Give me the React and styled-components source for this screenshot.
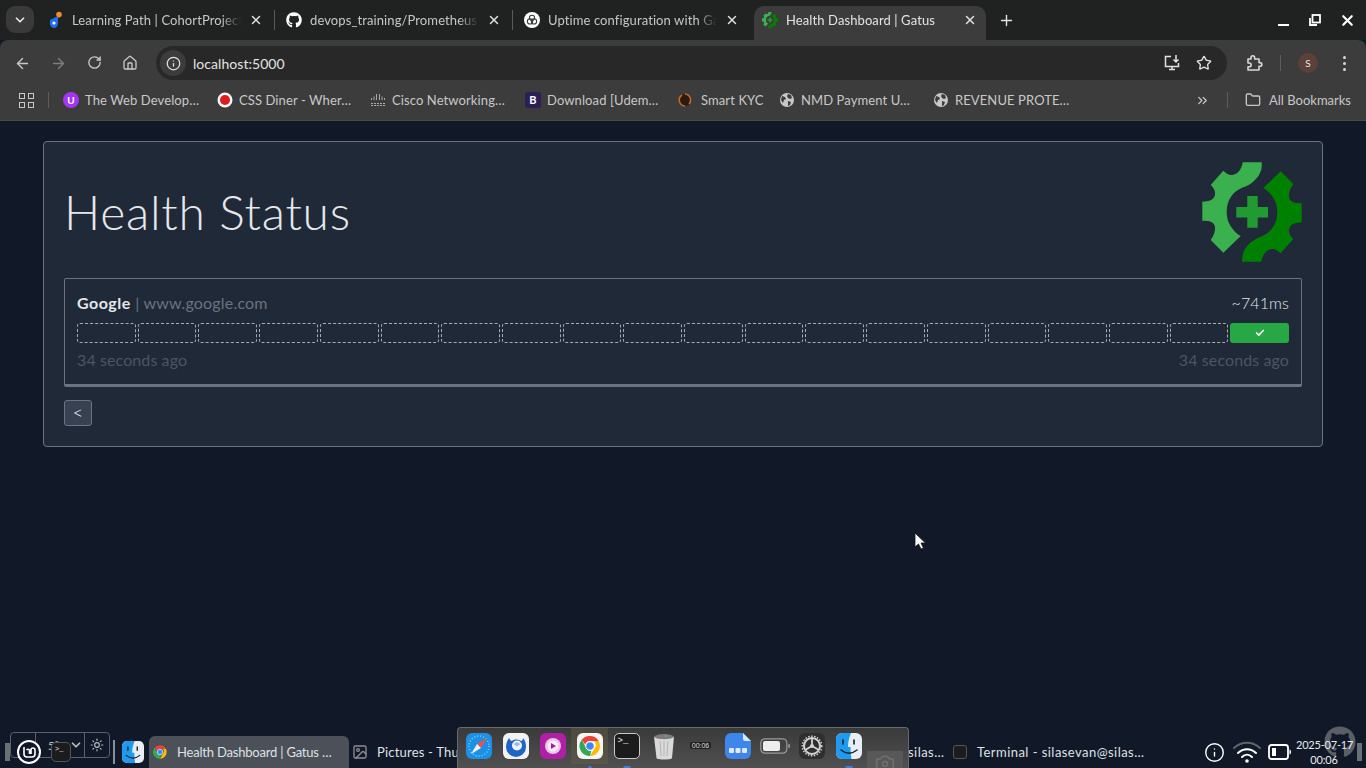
import React from "react";
import styled, { createGlobalStyle } from "styled-components";
import {
  ArrowLeft, ArrowRight, RotateCw, Home, Info, Star, X, Plus, ChevronDown,
  ChevronsRight, Folder, Check, Sun, Camera, Image as ImageIcon,
} from "lucide-react";
import { FaGithub } from "react-icons/fa";

const Global = createGlobalStyle`
  html, body { margin: 0; padding: 0; background: #111827; overflow: hidden; }
  body { font-family: Lato, "Open Sans", "Liberation Sans", sans-serif; }
  * { box-sizing: border-box; }
`;

const Screen = styled.div`
  position: relative;
  width: 1366px;
  height: 768px;
  display: flex;
  flex-direction: column;
  overflow: hidden;
  background: #111827;
`;

/* ---------- browser chrome ---------- */
const TabStrip = styled.div`
  height: 40px;
  background: #202221;
  display: flex;
  align-items: flex-end;
  padding-left: 6px;
`;
const TabMenu = styled.div`
  width: 28px;
  height: 27px;
  margin: 0 6px 7px 0;
  border-radius: 9px;
  background: #3a3a3a;
  color: #e4e4e4;
  display: flex;
  align-items: center;
  justify-content: center;
`;
const Tab = styled.div`
  position: relative;
  width: ${(p) => (p.$active ? 232 : 238)}px;
  height: 34px;
  padding: 0 ${(p) => (p.$active ? 9 : 15)}px 6px 8px;
  display: flex;
  align-items: center;
  background: ${(p) => (p.$active ? "#3c3c3c" : "transparent")};
  border-radius: 10px 10px 0 0;
  color: #c6c7c7;
  font-size: 13px;
  &::after {
    content: "";
    display: ${(p) => (p.$sep ? "block" : "none")};
    position: absolute;
    right: 3px;
    top: 4px;
    width: 1px;
    height: 20px;
    background: #5a5a5a;
  }
`;
const TabIcon = styled.span`
  width: 16px;
  height: 16px;
  flex: none;
  margin-right: 8px;
  display: flex;
  align-items: center;
  justify-content: center;
  color: #fff;
`;
const TabTitle = styled.span`
  flex: 1;
  white-space: nowrap;
  overflow: hidden;
  letter-spacing: 0.1px;
  color: ${(p) => (p.$active ? "#e3e3e3" : "#c6c7c7")};
  mask-image: linear-gradient(to right, #000 88%, transparent 100%);
`;
const TabClose = styled(X)`
  flex: none;
  margin-left: 8px;
  color: #e0e0e0;
`;
const NewTab = styled.div`
  width: 28px;
  height: 34px;
  padding-bottom: 6px;
  color: #e3e3e3;
  display: flex;
  align-items: center;
  justify-content: center;
  margin-left: 6px;
`;
const WindowControls = styled.div`
  margin-left: auto;
  height: 40px;
  display: flex;
  align-items: center;
  gap: 14px;
  padding-right: 10px;
`;
const WinGlyph = styled.span`
  width: 18px;
  height: 18px;
  display: flex;
  align-items: center;
  justify-content: center;
  color: #fff;
`;

const Toolbar = styled.div`
  height: 40px;
  background: #3c3c3c;
  border-radius: 8px 8px 0 0;
  display: flex;
  align-items: center;
  color: #c7c7c7;
  padding-top: 6px;
`;
const NavButton = styled.span`
  width: 36px;
  display: flex;
  justify-content: center;
  color: ${(p) => (p.$dim ? "#7d7d7d" : "#c7c7c7")};
`;
const NavGroup = styled.div`
  display: flex;
  margin-left: 4px;
`;
const Omnibox = styled.div`
  width: 1071px;
  height: 34px;
  margin-left: 8px;
  background: #282828;
  border-radius: 17px;
  display: flex;
  align-items: center;
  padding: 0 15px 0 4px;
  font-size: 14px;
  color: #e3e3e3;
  letter-spacing: 0.05px;
`;
const InfoChip = styled.span`
  width: 26px;
  height: 26px;
  border-radius: 50%;
  background: #3c3c3c;
  display: flex;
  align-items: center;
  justify-content: center;
  margin-right: 7px;
  color: #e3e3e3;
`;
const OmniActions = styled.div`
  margin-left: auto;
  display: flex;
  align-items: center;
  gap: 15px;
  color: #e3e3e3;
`;
const ToolRight = styled.div`
  flex: 1;
  display: flex;
  align-items: center;
  padding-left: 18px;
  color: #d8d8d8;
`;
const VSep = styled.span`
  width: 1px;
  height: 16px;
  margin: 0 ${(p) => p.$m || 16}px;
  background: #5c5c5c;
  flex: none;
`;
const Avatar = styled.span`
  width: 20px;
  height: 20px;
  border-radius: 50%;
  background: #5d4037;
  color: #e8e8e8;
  font-size: 10px;
  display: flex;
  align-items: center;
  justify-content: center;
`;
const Kebab = styled.span`
  margin-left: 25px;
  display: flex;
  flex-direction: column;
  gap: 3px;
  & > i { width: 3px; height: 3px; border-radius: 50%; background: #d8d8d8; display: block; }
`;

const BookmarkBar = styled.div`
  height: 41px;
  background: #3c3c3c;
  border-bottom: 1px solid #4a4a4a;
  display: flex;
  align-items: center;
  padding-left: 19px;
  padding-right: 15px;
  font-size: 13px;
  color: #c8c8c8;
`;
const AppsGrid = styled.span`
  display: grid;
  grid-template-columns: 6px 6px;
  grid-gap: 3px;
  & > i { width: 6px; height: 6px; border: 1.5px solid #c7c7c7; display: block; }
`;
const Bookmark = styled.div`
  display: flex;
  align-items: center;
  white-space: nowrap;
  width: ${(p) => p.$w}px;
  letter-spacing: 0.1px;
`;
const BookmarkIcon = styled.span`
  width: 16px;
  height: 16px;
  margin-right: ${(p) => p.$gap || 6}px;
  flex: none;
  display: flex;
  align-items: center;
  justify-content: center;
`;
const UdemyDot = styled.span`
  width: 16px;
  height: 16px;
  border-radius: 50%;
  background: #a435f0;
  color: #fff;
  font-size: 10px;
  font-weight: 700;
  text-align: center;
  line-height: 16px;
`;
const BootBadge = styled.span`
  width: 16px;
  height: 16px;
  border-radius: 3px;
  background: #2b1f55;
  color: #fff;
  font-size: 11px;
  font-weight: 700;
  text-align: center;
  line-height: 16px;
`;
const BookmarkEnd = styled.div`
  margin-left: auto;
  display: flex;
  align-items: center;
  color: #c8c8c8;
`;
const AllLabel = styled.span`
  margin-left: 8px;
`;

/* ---------- page ---------- */
const Main = styled.main`
  flex: 1;
  padding: 20px 43px 0;
`;
const Card = styled.section`
  width: 1280px;
  height: 306px;
  background: #1f2937;
  border: 1px solid #6b7280;
  border-radius: 4px;
  padding: 20px;
`;
const CardHead = styled.header`
  height: 100px;
  display: flex;
  align-items: center;
  justify-content: space-between;
  margin-bottom: 16px;
`;
const Title = styled.h1`
  margin: 0 0 2px;
  font-size: 48px;
  font-weight: 300;
  color: #e5e7eb;
  letter-spacing: 0.72px;
`;
const ServiceBox = styled.div`
  height: 109px;
  border: 1px solid #6b7280;
  border-bottom-width: 3px;
  border-radius: 2px;
  padding: 11px 12px 0;
`;
const ServiceRow = styled.div`
  display: flex;
  justify-content: space-between;
  align-items: center;
  height: 24px;
  font-size: 16px;
  color: #e5e7eb;
  font-weight: 300;
  letter-spacing: 0.1px;
`;
const Name = styled.strong`
  font-weight: 700;
  color: #e5e7eb;
  letter-spacing: 0.5px;
`;
const Host = styled.span`
  color: #6b7280;
  font-weight: 400;
  letter-spacing: 0.2px;
`;
const Bars = styled.div`
  display: grid;
  grid-template-columns: repeat(20, 1fr);
  gap: 2px;
  height: 20px;
  margin: 9px 0 4px;
`;
const Bar = styled.div`
  border-radius: 3px;
  border: ${(p) => (p.$ok ? "none" : "1px dashed #a7adb7")};
  background: ${(p) => (p.$ok ? "#28a745" : "transparent")};
  color: #fff;
  display: flex;
  align-items: center;
  justify-content: center;
`;
const TimeRow = styled(ServiceRow)`
  color: #4b5563;
  font-weight: 400;
`;
const BackButton = styled.button`
  display: block;
  margin-top: 13px;
  width: 28px;
  height: 26px;
  padding: 0 0 5px;
  background: #374151;
  border: 1px solid #6b7280;
  border-radius: 3px;
  color: #f3f4f6;
  font: 300 18px Lato, sans-serif;
`;
const CursorMark = styled.svg`
  position: absolute;
  left: 914px;
  top: 532px;
`;

/* ---------- desktop panel ---------- */
const Panel = styled.footer`
  position: relative;
  height: 32px;
  display: flex;
  align-items: stretch;
  padding-left: 17px;
  color: #d5d8dd;
  font-size: 13px;
`;
const Grip = styled.span`
  position: absolute;
  top: 7px;
  ${(p) => (p.$right ? "right: 4px;" : "left: 5px;")}
  width: 5px;
  height: 18px;
  background: radial-gradient(circle, #6b6f76 0.8px, transparent 1px) 0 0 / 2px 2px;
`;
const AppletBox = styled.div`
  position: absolute;
  left: 10px;
  top: -4px;
  width: 100px;
  height: 26px;
  border: 1px solid #5b616c;
  border-radius: 4px;
  display: grid;
  grid-template-columns: 25px 49px 1fr;
  color: #b9bdc3;
  font-size: 11px;
`;
const AppletCell = styled.span`
  border-right: ${(p) => (p.$last ? "none" : "1px solid #5b616c")};
  display: flex;
  align-items: center;
  justify-content: ${(p) => (p.$spread ? "space-between" : "center")};
  padding: 0 ${(p) => (p.$spread ? 1 : 0)}px 0 ${(p) => (p.$spread ? 12 : 0)}px;
`;
const MintLogo = styled.span`
  position: relative;
  width: 24px;
  height: 24px;
  margin-top: 4px;
  border-radius: 50%;
  background: #111827;
  border: 2.5px solid #fff;
  flex: none;
  display: flex;
  align-items: center;
  justify-content: center;
`;
const TermTile = styled.span`
  position: relative;
  flex: none;
  width: ${(p) => p.$s || 20}px;
  height: ${(p) => p.$s || 20}px;
  background: #1c1c1c;
  border: 1px solid ${(p) => p.$line || "#555"};
  border-radius: ${(p) => (p.$s ? Math.round(p.$s / 5) : 5)}px;
  color: #eee;
  font: ${(p) => (p.$s && p.$s > 20 ? 9 : 7)}px "Liberation Mono", monospace;
  line-height: 1;
  padding: 3px 0 0 3px;
`;
const PanelTerm = styled(TermTile)`
  margin: 6px 42px 0 10px;
`;
const PanelSep = styled.span`
  width: 2px;
  height: 24px;
  background: #8a8f96;
  margin: 4px 7px 0 0;
  flex: none;
`;
const TaskItem = styled.div`
  width: 200px;
  flex: none;
  display: flex;
  align-items: center;
  padding-left: 3px;
  border-radius: 6px 6px 0 0;
  background: ${(p) => (p.$active ? "#4c5059" : "transparent")};
  color: #dfe2e6;
  white-space: nowrap;
  overflow: hidden;
  letter-spacing: ${(p) => p.$track ?? 0.2}px;
`;
const TaskIcon = styled.span`
  width: 16px;
  height: 16px;
  margin-right: 9px;
  flex: none;
  display: flex;
  align-items: center;
  justify-content: center;
  color: #8d8f93;
`;
const FinderWrap = styled.span`
  margin: 5px 5px 0 0;
  flex: none;
  display: flex;
`;
const Tray = styled.div`
  margin-left: auto;
  display: flex;
  align-items: center;
  color: #fff;
  position: relative;
`;
const TrayInfo = styled(Info)`
  margin-right: 7px;
`;
const TrayGap = styled.span`
  width: 6px;
`;
const Clock = styled.div`
  width: 56px;
  margin: 0 14px 0 4px;
  text-align: center;
  font-size: 11px;
  letter-spacing: -0.2px;
  line-height: 15px;
  color: #e8eaee;
  white-space: nowrap;
  position: relative;
  z-index: 1;
`;
const GithubBlob = styled(FaGithub)`
  position: absolute;
  right: 10px;
  top: -10px;
  color: #5a5f66;
`;
const Dock = styled.div`
  position: absolute;
  left: 457px;
  top: 727px;
  width: 452px;
  height: 41px;
  border: 1px solid #6a6a6a;
  border-bottom: none;
  border-radius: 4px 4px 0 0;
  background: linear-gradient(#3a3a3a, #505050);
  display: flex;
  align-items: flex-start;
  padding: 5px 0 0 2px;
  z-index: 2;
`;
const DockCell = styled.div`
  position: relative;
  width: 37px;
  height: 36px;
  margin-top: -5px;
  padding: ${(p) => (p.$mid ? 0 : 5)}px 0 0;
  display: flex;
  flex: none;
  justify-content: center;
  align-items: ${(p) => (p.$mid ? "center" : "flex-start")};
  background: ${(p) => (p.$lit ? "linear-gradient(#4d4b3d, #58564a)" : "none")};
  &::after {
    content: "";
    display: ${(p) => (p.$dot ? "block" : "none")};
    position: absolute;
    left: 50%;
    bottom: -4px;
    width: ${(p) => (p.$dot === 2 ? 7 : 3)}px;
    height: 2px;
    transform: translateX(-50%);
    background: #3b7fd9;
  }
`;
const Tile = styled.span`
  width: 26px;
  height: 26px;
  border-radius: 6px;
  background: ${(p) => p.$bg};
  display: flex;
  align-items: center;
  justify-content: center;
  overflow: hidden;
  color: #fff;
`;
const DockClock = styled.span`
  margin-top: 9px;
  padding: 0 2px;
  background: #222;
  border-radius: 2px;
  color: #ddd;
  font: 7px "Liberation Sans", sans-serif;
`;
const GhostTile = styled.span`
  position: absolute;
  left: 409px;
  top: 23px;
  width: 36px;
  height: 18px;
  background: #585858;
  color: #6e6e6e;
  display: flex;
  justify-content: center;
  padding-top: 2px;
`;

/* ---------- drawings ---------- */
const halfGear =
  "M40.7 0.3 L59.7 0.3 C60.3 8 58 13 53 18 C49 22 45 24 41.3 25.3 C31 29 24.7 38 24.7 49.7 C24.7 57 27 62 30 66 C32.5 69.5 35 72 38.7 74 L21.3 90.7 L8.7 78 C12 73 13.5 69 13 64.7 C12 61 10 59.7 6 59 L0.3 58.7 L0.3 39.7 L6 39 C10 38.3 12 36.5 13 33 C13.5 29 12 26 8.7 23 L21.3 8.7 C25 12 27 13.3 29.7 13 C35 13 39.5 8 40.7 0.3 Z";

const GatusLogo = ({ size = 100 }) => (
  <svg width={size} height={size} viewBox="0 0 100 100">
    <path d={halfGear} fill="#3bb04e" />
    <path d={halfGear} fill="#008000" transform="rotate(180 50 50)" />
    <path d="M45.3 34h10.4v11h10.3v10.4H55.7v10.3H45.3V55.4H34.3V45h11z" fill="#229a32" />
  </svg>
);
const CohortIcon = () => (
  <svg width="16" height="18" viewBox="0 0 16 18">
    <path d="M2 9l8-4v7c0 3-2 5-4 5s-4-2-4-4z" fill="#1f6ff2" />
    <circle cx="6" cy="12" r="1.6" fill="#fff" />
    <circle cx="11" cy="3.6" r="2.8" fill="#f08a2c" />
  </svg>
);
const KnotIcon = () => (
  <svg width="16" height="16" viewBox="0 0 16 16">
    <circle cx="8" cy="8" r="8" fill="#fff" />
    <g fill="none" stroke="#3a3a3a" strokeWidth="1.1">
      <circle cx="8" cy="5.8" r="2.6" />
      <circle cx="6" cy="9.4" r="2.6" />
      <circle cx="10" cy="9.4" r="2.6" />
    </g>
  </svg>
);
const Globe = () => (
  <svg width="14" height="14" viewBox="0 0 14 14">
    <circle cx="7" cy="7" r="7" fill="#c7c7c7" />
    <path d="M2 3l3 1 1 2-2 1-1 3-2-3zM8 1l3 1 1 3-2 1-2-1-1-2zM8 8l3 1-1 3-2 1z" fill="#3c3c3c" />
  </svg>
);
const CiscoIcon = () => (
  <svg width="16" height="14" viewBox="0 0 16 14">
    <g stroke="#a8a8a8" strokeWidth="1">
      <path d="M1.500 5v2M4 3.500v3.500M6.500 1v6M9.500 1v6M12 3.500v3.500M14.500 5v2" />
      <path d="M1 10.500h14M1 12.500h14" strokeDasharray="2 1" />
    </g>
  </svg>
);
const KycIcon = () => (
  <svg width="14" height="16" viewBox="0 0 14 16">
    <circle cx="7" cy="8" r="6" fill="#2a1c12" />
    <path d="M7 2a6 6 0 0 1 4 10M7 14a6 6 0 0 1-3-11" fill="none" stroke="#c9691f" strokeWidth="1.500" />
  </svg>
);
const RedDot = () => (
  <svg width="16" height="16" viewBox="0 0 16 16">
    <circle cx="8" cy="8" r="7.500" fill="#fff" />
    <circle cx="8" cy="8" r="5" fill="#e01b1b" />
  </svg>
);
const ChromeIcon = ({ size = 16 }) => (
  <svg width={size} height={size} viewBox="0 0 48 48">
    <path d="M24 4a20 20 0 0 1 17.300 10H24a10 10 0 0 0-9.500 6.900L7.400 11.600A20 20 0 0 1 24 4z" fill="#ea4335" />
    <path d="M41.300 14A20 20 0 0 1 24 44l8.700-15a10 10 0 0 0-.7-15z" fill="#fbbc04" />
    <path d="M24 44A20 20 0 0 1 7.400 11.600L16 27a10 10 0 0 0 10.600 6.700z" fill="#34a853" />
    <circle cx="24" cy="24" r="8.500" fill="#4285f4" stroke="#fff" strokeWidth="2" />
  </svg>
);
const FinderIcon = ({ size = 22 }) => (
  <svg width={size} height={size} viewBox="0 0 26 26">
    <rect width="26" height="26" rx="6" fill="#e8eef6" />
    <path d="M6 0h9c-2 5-3 9-3 14h2.500c0 4 .3 8 1 12H6a6 6 0 0 1-6-6V6a6 6 0 0 1 6-6z" fill="#1e9bf0" />
    <path d="M7 7v4M18 7v4" stroke="#122" strokeWidth="1.600" strokeLinecap="round" />
    <path d="M5 17c5 4 11 4 16 0" fill="none" stroke="#122" strokeWidth="1.400" strokeLinecap="round" />
  </svg>
);
const WifiIcon = () => (
  <svg width="30" height="24" viewBox="0 0 30 24" fill="none" strokeLinecap="round">
    <path d="M2 8c8-7 18-7 26 0" stroke="#5d6470" strokeWidth="2" />
    <path d="M6 13c5.500-5 12.500-5 18 0" stroke="#fff" strokeWidth="2" />
    <path d="M10 17c3-3 7-3 10 0" stroke="#fff" strokeWidth="2" />
    <circle cx="15" cy="21" r="1.800" fill="#fff" />
  </svg>
);
const BatteryIcon = () => (
  <svg width="24" height="16" viewBox="0 0 24 16">
    <rect x="1" y="1" width="19" height="14" rx="2.500" fill="none" stroke="#fff" strokeWidth="1.800" />
    <rect x="4" y="4" width="4" height="8" fill="#fff" />
    <path d="M21.500 5.500c2 0 2 5 0 5z" fill="#fff" />
  </svg>
);
const InstallIcon = () => (
  <svg width="18" height="18" viewBox="0 0 18 18" fill="none" stroke="#e3e3e3" strokeWidth="1.500">
    <path d="M8 2.500H2.500v10h13V9" />
    <path d="M6 15.500h6M9 12.500v3" />
    <path d="M13 1v6.500M10.500 5.500L13 8l2.500-2.500" />
  </svg>
);
const PuzzleIcon = () => (
  <svg width="18" height="18" viewBox="0 0 18 18" fill="none" stroke="#d8d8d8" strokeWidth="1.600" strokeLinejoin="round">
    <path d="M3 5h3V3.500a1.800 1.800 0 0 1 3.600 0V5h4.400v3.600h1a1.800 1.800 0 0 1 0 3.600h-1V16H3v-3.200h1.200a1.900 1.900 0 0 0 0-3.800H3z" />
  </svg>
);
const RestoreIcon = () => (
  <svg width="12" height="12" viewBox="0 0 12 12" fill="none" stroke="#fff" strokeWidth="1.800">
    <rect x="3.500" y="1" width="7.500" height="7.500" />
    <path d="M1 4v7h7" />
  </svg>
);
const MinIcon = () => (
  <svg width="11" height="11" viewBox="0 0 11 11"><rect y="9" width="11" height="2" fill="#fff" /></svg>
);
const SafariIcon = () => (
  <svg width="26" height="26" viewBox="0 0 26 26">
    <rect width="26" height="26" rx="6" fill="#1c8fe6" />
    <circle cx="13" cy="13" r="10" fill="none" stroke="#8fd0fa" strokeWidth="1.500" strokeDasharray="1 2" />
    <path d="M21 5l-10 6 4 4z" fill="#f04f43" />
    <path d="M5 21l10-6-4-4z" fill="#eef3f7" />
  </svg>
);
const BirdIcon = () => (
  <svg width="26" height="26" viewBox="0 0 26 26">
    <rect width="26" height="26" rx="6" fill="#f3f3f3" />
    <path d="M6 5c-2 3-3 6-3 9a10 10 0 0 0 20 0c0-4-1-7-3-9 0 2-1 3-2 3-3-2-7-2-9 0-1 0-2-1-3-3z" fill="#1d66c7" />
    <circle cx="14" cy="12.500" r="5" fill="#f3f3f3" />
    <path d="M10.500 11l3.500 2.500 3.500-2.500-3.500-2z" fill="#8dbbe8" />
  </svg>
);
const MusicIcon = () => (
  <svg width="26" height="26" viewBox="0 0 26 26">
    <rect width="26" height="26" rx="6" fill="#b01fa5" />
    <circle cx="13" cy="13" r="8" fill="#e9c6e6" />
    <circle cx="13" cy="13" r="5.500" fill="#f7eef6" />
    <path d="M11 10l5 3-5 3z" fill="#a61d9b" />
  </svg>
);
const TrashIcon = () => (
  <svg width="24" height="28" viewBox="0 0 24 28">
    <ellipse cx="12" cy="4" rx="10" ry="3" fill="#7c7c7c" />
    <circle cx="8" cy="3.500" r="1" fill="#c06a4a" />
    <circle cx="14" cy="3" r="1" fill="#6a9ac6" />
    <path d="M2 4l2.500 21c.3 2 15 2 15.500 0L22 4c-4 3-16 3-20 0z" fill="#d9d9d9" />
    <path d="M8 8l1 15M12 8v15M16 8l-1 15" stroke="#b5b5b5" strokeWidth="1" />
  </svg>
);
const FilesIcon = () => (
  <svg width="26" height="26" viewBox="0 0 26 26">
    <path d="M6 0h12l8 8v12a6 6 0 0 1-6 6H6a6 6 0 0 1-6-6V6a6 6 0 0 1 6-6z" fill="#3f86ec" />
    <path d="M18 0l8 8h-6a2 2 0 0 1-2-2z" fill="#d6e6fb" />
    <rect x="4" y="15" width="5" height="5" rx="1" fill="#dceafc" />
    <rect x="10.500" y="15" width="5" height="5" rx="1" fill="#dceafc" />
    <rect x="17" y="15" width="5" height="5" rx="1" fill="#dceafc" />
  </svg>
);
const DockBattery = () => (
  <svg width="30" height="16" viewBox="0 0 30 16">
    <rect x="0.800" y="0.800" width="26" height="14.400" rx="4" fill="none" stroke="#9a9a9a" strokeWidth="1.200" />
    <rect x="3" y="3" width="17" height="10" rx="2" fill="#eee" />
    <rect x="28" y="6" width="2" height="4" rx="1" fill="#8c8c8c" />
  </svg>
);
const GearWheel = () => (
  <svg width="22" height="22" viewBox="0 0 22 22" fill="none" stroke="#d4d4d4">
    <circle cx="11" cy="11" r="8" strokeWidth="2" />
    <circle cx="11" cy="11" r="9.800" strokeWidth="1.400" strokeDasharray="1.500 1.500" />
    <path d="M11 11V3.500M11 11l6.500 3.700M11 11l-6.500 3.700" strokeWidth="1.800" />
    <circle cx="11" cy="11" r="2" fill="#d4d4d4" stroke="none" />
  </svg>
);
const SystemCursor = () => (
  <CursorMark width="13" height="18" viewBox="0 0 13 18">
    <path d="M1 1v14l3.500-3 2.500 5 2.500-1-2.500-5h4.500z" fill="#fff" stroke="#111" strokeWidth="0.800" />
  </CursorMark>
);

const tabs = [
  { icon: <CohortIcon />, title: "Learning Path | CohortProject", sep: true },
  { icon: <FaGithub size={16} />, title: "devops_training/Prometheus", sep: true },
  { icon: <KnotIcon />, title: "Uptime configuration with Gatus" },
];
const bookmarks = [
  { icon: <UdemyDot>U</UdemyDot>, label: "The Web Develop…", w: 154 },
  { icon: <RedDot />, label: "CSS Diner - Wher…", w: 153 },
  { icon: <CiscoIcon />, label: "Cisco Networking…", w: 155 },
  { icon: <BootBadge>B</BootBadge>, label: "Download [Udem…", w: 152 },
  { icon: <KycIcon />, label: "Smart KYC", w: 102, gap: 8 },
  { icon: <Globe />, label: "NMD Payment U…", w: 154 },
  { icon: <Globe />, label: "REVENUE PROTE…", w: 150 },
];

export default function App() {
  return (
    <Screen>
      <Global />
      <TabStrip>
        <TabMenu><ChevronDown size={14} strokeWidth={3} /></TabMenu>
        {tabs.map((t) => (
          <Tab key={t.title} $sep={t.sep}>
            <TabIcon>{t.icon}</TabIcon>
            <TabTitle>{t.title}</TabTitle>
            <TabClose size={14} strokeWidth={2.5} />
          </Tab>
        ))}
        <Tab $active>
          <TabIcon><GatusLogo size={16} /></TabIcon>
          <TabTitle $active>Health Dashboard | Gatus</TabTitle>
          <TabClose size={14} strokeWidth={2.5} />
        </Tab>
        <NewTab><Plus size={17} strokeWidth={2} /></NewTab>
        <WindowControls>
          <WinGlyph><MinIcon /></WinGlyph>
          <WinGlyph><RestoreIcon /></WinGlyph>
          <WinGlyph><X size={17} strokeWidth={3} /></WinGlyph>
        </WindowControls>
      </TabStrip>

      <Toolbar>
        <NavGroup>
          <NavButton><ArrowLeft size={17} /></NavButton>
          <NavButton $dim><ArrowRight size={17} /></NavButton>
          <NavButton><RotateCw size={15} strokeWidth={2.2} /></NavButton>
          <NavButton><Home size={16} /></NavButton>
        </NavGroup>
        <Omnibox>
          <InfoChip><Info size={15} /></InfoChip>
          localhost:5000
          <OmniActions>
            <InstallIcon />
            <Star size={16} strokeWidth={2} />
          </OmniActions>
        </Omnibox>
        <ToolRight>
          <PuzzleIcon />
          <VSep $m={17} />
          <Avatar>S</Avatar>
          <Kebab><i /><i /><i /></Kebab>
        </ToolRight>
      </Toolbar>

      <BookmarkBar>
        <AppsGrid><i /><i /><i /><i /></AppsGrid>
        <VSep $m={14} />
        {bookmarks.map((b) => (
          <Bookmark key={b.label} $w={b.w}>
            <BookmarkIcon $gap={b.gap}>{b.icon}</BookmarkIcon>
            {b.label}
          </Bookmark>
        ))}
        <BookmarkEnd>
          <ChevronsRight size={15} />
          <VSep $m={17} />
          <Folder size={16} />
          <AllLabel>All Bookmarks</AllLabel>
        </BookmarkEnd>
      </BookmarkBar>

      <Main>
        <Card>
          <CardHead>
            <Title>Health Status</Title>
            <GatusLogo />
          </CardHead>
          <ServiceBox>
            <ServiceRow>
              <span><Name>Google</Name> <Host>| www.google.com</Host></span>
              <span>~741ms</span>
            </ServiceRow>
            <Bars>
              {Array.from({ length: 19 }, (_, i) => <Bar key={i} />)}
              <Bar $ok><Check size={10} strokeWidth={4} /></Bar>
            </Bars>
            <TimeRow>
              <span>34 seconds ago</span>
              <span>34 seconds ago</span>
            </TimeRow>
          </ServiceBox>
          <BackButton>&lt;</BackButton>
        </Card>
      </Main>

      <Panel>
        <Grip />
        <AppletBox>
          <AppletCell />
          <AppletCell $spread>
            5°<ChevronDown size={14} strokeWidth={3} />
          </AppletCell>
          <AppletCell $last><Sun size={14} /></AppletCell>
        </AppletBox>
        <MintLogo>
          <svg width="13" height="11" viewBox="0 0 13 11" fill="none" stroke="#fff" strokeWidth="1.600">
            <path d="M1 0v7a3 3 0 0 0 3 3h5a3 3 0 0 0 3-3V3a2 2 0 0 0-4 0v4M6.500 7V3a2 2 0 0 0-3 0" />
          </svg>
        </MintLogo>
        <PanelTerm>&gt;_</PanelTerm>
        <PanelSep />
        <FinderWrap><FinderIcon /></FinderWrap>
        <TaskItem $active $track={-0.2}>
          <TaskIcon><ChromeIcon /></TaskIcon>
          Health Dashboard | Gatus …
        </TaskItem>
        <TaskItem>
          <TaskIcon><ImageIcon size={16} /></TaskIcon>
          Pictures - Thunar
        </TaskItem>
        <TaskItem />
        <TaskItem $track={0.45}>
          <TaskIcon><TermTile $s={14} /></TaskIcon>
          Terminal - silasevan@silas…
        </TaskItem>
        <TaskItem $track={0.45}>
          <TaskIcon><TermTile $s={14} /></TaskIcon>
          Terminal - silasevan@silas…
        </TaskItem>
        <Tray>
          <GithubBlob size={32} />
          <TrayInfo size={21} strokeWidth={1.6} />
          <WifiIcon />
          <TrayGap />
          <BatteryIcon />
          <Clock>2025-07-17<br />00:06</Clock>
        </Tray>
        <Grip $right />
      </Panel>

      <Dock>
        <DockCell><SafariIcon /></DockCell>
        <DockCell><BirdIcon /></DockCell>
        <DockCell><MusicIcon /></DockCell>
        <DockCell $lit $dot={1}><Tile $bg="#f5f5f5"><ChromeIcon size={24} /></Tile></DockCell>
        <DockCell $dot={2}><TermTile $s={26} $line="#c9c9c9">&gt;_</TermTile></DockCell>
        <DockCell><TrashIcon /></DockCell>
        <DockCell><DockClock>00:06</DockClock></DockCell>
        <DockCell><FilesIcon /></DockCell>
        <DockCell $mid><DockBattery /></DockCell>
        <DockCell><Tile $bg="#2f2f2f"><GearWheel /></Tile></DockCell>
        <DockCell $dot={2}><FinderIcon size={26} /></DockCell>
        <GhostTile><Camera size={20} /></GhostTile>
      </Dock>
      <SystemCursor />
    </Screen>
  );
}
